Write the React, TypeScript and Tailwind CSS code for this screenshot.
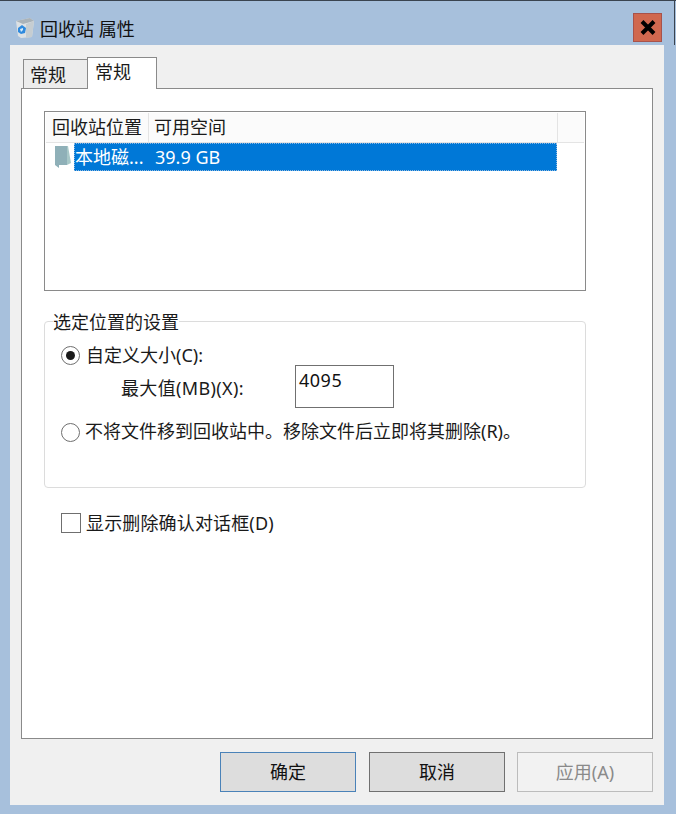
const FONT = "font-['Noto_Sans','Noto_Sans_CJK_SC',sans-serif]";

function BinIcon() {
  return (
    <svg width="20" height="22" viewBox="0 0 20 22" className="shrink-0">
      <path d="M1 4 L15 1 L19 4 L17 20 L6 21 L3 19 Z" fill="#dde1e4" />
      <path d="M1 4 L15 1 L19 4 L8 7 Z" fill="#aab3b9" />
      <path d="M11 7 L19 4 L17 20 L11 21 Z" fill="#c6cdd1" />
      <path d="M3 11 L7 8 L11 11 L10 16 L6 17 L3 15 Z" fill="#2f8ade" />
      <path d="M5 12 L8 11 L8 13 L6 15 Z" fill="#d6eaf8" />
    </svg>
  );
}

function DriveIcon() {
  return (
    <svg width="18" height="24" viewBox="0 0 18 24" className="shrink-0">
      <path d="M1 1 L13 1 L13 20 L5 20 L5 23 L1 20 Z" fill="#8fb0b8" />
      <path d="M13 1 L14 1 L17 18 L13 20 Z" fill="#a8c8c8" />
    </svg>
  );
}

function Button({ label, className }: { label: string; className: string }) {
  return (
    <div className={`flex h-[40px] w-[136px] items-center justify-center border text-[18px] ${className}`}>
      {label}
    </div>
  );
}

export default function App() {
  return (
    <div className={`${FONT} flex h-[814px] w-[676px] flex-col overflow-hidden bg-[#a7c0dc] text-[18px] leading-[24px] text-[#1a1a1a]`}>
      <div className="h-[1px] shrink-0 bg-[#3a4450]" />
      <div className="mr-[1px] flex h-[44px] shrink-0 items-start border-r border-[#3a4450] pl-[15px] pr-[12px] pt-[12px]">
        <div className="mt-[4px]">
          <BinIcon />
        </div>
        <span className="ml-[5px] mt-[4px] text-[#111]">回收站 属性</span>
        <div className="ml-auto flex h-[29px] w-[29px] items-center justify-center border border-[#a8524a] bg-[#d0684f]">
          <svg width="16" height="15" viewBox="0 0 16 15">
            <path d="M2 1.5 L14 13.5 M14 1.5 L2 13.5" stroke="#000" strokeWidth="4" />
          </svg>
        </div>
      </div>

      <div className="ml-[10px] flex h-[760px] w-[654px] flex-col bg-[#f0f0f0] px-[11px] pt-[12px]">
        <div className="flex h-[31px] items-end pl-[2px]">
          <div className="flex h-[29px] w-[65px] border border-b-0 border-[#8a8a8a] bg-[#ececec] pl-[6px] pt-[3px]">常规</div>
          <div className="z-10 -mb-[1px] -ml-[1px] flex h-[32px] w-[70px] border border-b-0 border-[#8a8a8a] bg-white pl-[7px] pt-[2px]">常规</div>
        </div>

        <div className="flex h-[651px] w-[632px] flex-col border border-[#8a8a8a] bg-white pl-[22px] pt-[22px]">
          <div className="flex h-[180px] w-[542px] flex-col border border-[#8a8a8a] px-[1px] pt-[1px]">
            <div className="flex h-[30px] border-b border-[#e4e4e4] bg-[#fbfbfb]">
              <div className="w-[103px] border-r border-[#e4e4e4] pl-[6px] pt-[2px]">回收站位置</div>
              <div className="w-[409px] border-r border-[#e4e4e4] pl-[5px] pt-[2px]">可用空间</div>
            </div>
            <div className="flex h-[28px] items-center pl-[8px]">
              <DriveIcon />
              <div className="ml-[2px] flex h-[28px] w-[483px] items-center border border-dotted border-[#8fb8e0] bg-[#0078d7] text-white">
                <span className="w-[80px]">本地磁...</span>
                <span>39.9 GB</span>
              </div>
            </div>
          </div>

          <div className="mt-[30px] h-[167px] w-[542px] rounded-[4px] border border-[#dcdcdc] pl-[16px]">
            <div className="-ml-[8px] -mt-[12px] w-fit bg-white text-[#1a1a1a]">选定位置的设置</div>
            <div className="mt-[9px] flex h-[24px] items-center">
              <div className="flex h-[19px] w-[19px] items-center justify-center rounded-full border border-[#6f6f6f]">
                <div className="h-[9px] w-[9px] rounded-full bg-[#1a1a1a]" />
              </div>
              <span className="ml-[6px]">自定义大小(C):</span>
            </div>
            <div className="flex h-[42px] items-start pl-[60px]">
              <span className="mt-[9px] w-[174px] tracking-[0.35px]">最大值(MB)(X):</span>
              <div className="-mt-[2px] h-[43px] w-[99px] border border-[#707070] pl-[3px] pt-[2px] leading-[24px] tracking-[0.5px] text-[#111]">4095</div>
            </div>
            <div className="mt-[10px] flex h-[24px] items-center">
              <div className="h-[19px] w-[19px] translate-y-[1px] rounded-full border border-[#6f6f6f]" />
              <span className="ml-[5px]">不将文件移到回收站中。移除文件后立即将其删除(R)。</span>
            </div>
          </div>

          <div className="ml-[17px] mt-[24px] flex h-[22px] items-center">
            <div className="h-[20px] w-[20px] border border-[#6f6f6f]" />
            <span className="ml-[5px] tracking-[0.15px]">显示删除确认对话框(D)</span>
          </div>
        </div>

        <div className="mt-[13px] flex justify-end gap-[13px]">
          <Button label="确定" className="border-[#4a82b8] bg-[#dddddd] text-[#111]" />
          <Button label="取消" className="border-[#707070] bg-[#dddddd] text-[#111]" />
          <Button label="应用(A)" className="-ml-[1px] border-[#bcbcbc] bg-[#f2f2f2] text-[#8a8a8a]" />
        </div>
      </div>
    </div>
  );
}
